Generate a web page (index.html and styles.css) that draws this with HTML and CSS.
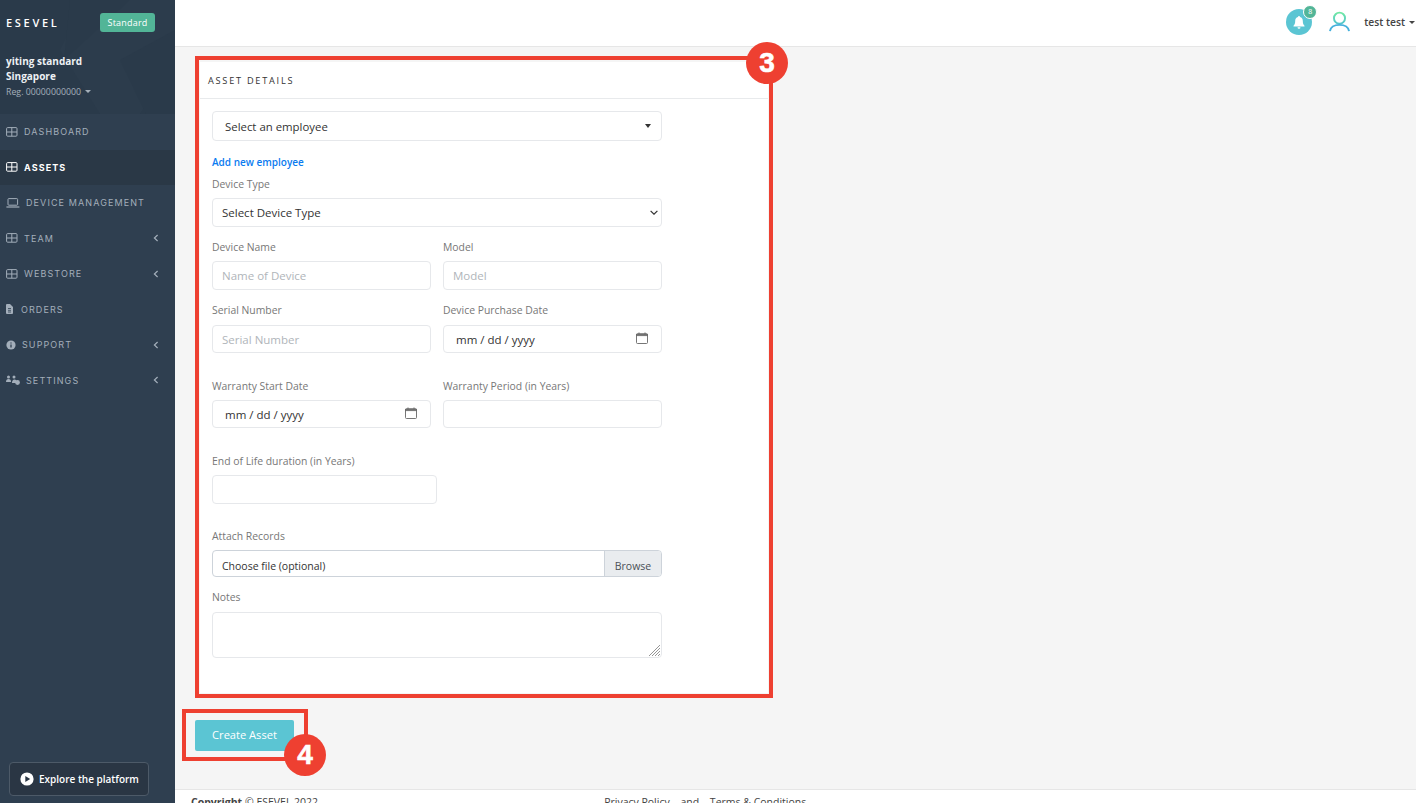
FILE: index.html
```html
<!DOCTYPE html>
<html>
<head>
  <title>Create Asset</title>
  <link rel="stylesheet" href="styles.css">
</head>
<body>
  <aside class="sidebar">
    <div class="side-top">
      <svg class="side-pattern" width="175" height="114" viewBox="0 0 175 114">
        <polygon points="60,50 85,0 175,0 175,60 140,114 100,114" fill="#2c3c4c"/>
        <polygon points="70,0 130,0 64,60" fill="#2a3a4a"/>
        <polygon points="120,60 175,30 175,114 146,114" fill="#2a3a4a"/>
      </svg>
      <div class="brand-row">
        <span class="brand">ESEVEL</span>
        <span class="plan">Standard</span>
      </div>
      <div class="company">yiting standard<br>Singapore</div>
      <div class="reg">Reg. 00000000000 <span class="reg-caret"></span></div>
    </div>
    <nav class="nav">
      <a class="nav-item">
        <svg class="nav-icon" width="12" height="10" viewBox="0 0 12 10"><rect x=".6" y=".6" width="10.4" height="8.6" rx="1" fill="none" stroke="currentColor" stroke-width="1"/><path d="M.6 5h10.4M5.8.6v8.6" stroke="currentColor" stroke-width="1"/></svg>
        <span class="nav-text">DASHBOARD</span>
      </a>
      <a class="nav-item active">
        <svg class="nav-icon" width="12" height="10" viewBox="0 0 12 10"><rect x=".6" y=".6" width="10.4" height="8.6" rx="1" fill="none" stroke="currentColor" stroke-width="1"/><path d="M.6 5h10.4M5.8.6v8.6" stroke="currentColor" stroke-width="1"/></svg>
        <span class="nav-text">ASSETS</span>
      </a>
      <a class="nav-item">
        <svg class="nav-icon wide" width="14" height="10" viewBox="0 0 14 10"><rect x="2" y=".6" width="9.6" height="6.6" rx=".8" fill="none" stroke="currentColor" stroke-width="1"/><path d="M.4 9h13" stroke="currentColor" stroke-width="1.2"/></svg>
        <span class="nav-text">DEVICE MANAGEMENT</span>
      </a>
      <a class="nav-item">
        <svg class="nav-icon" width="12" height="10" viewBox="0 0 12 10"><rect x=".6" y=".6" width="10.4" height="8.6" rx="1" fill="none" stroke="currentColor" stroke-width="1"/><path d="M.6 5h10.4M5.8.6v8.6" stroke="currentColor" stroke-width="1"/></svg>
        <span class="nav-text">TEAM</span>
        <svg class="nav-arrow" width="6" height="8" viewBox="0 0 6 8"><path d="M4.6 1 1.4 4l3.2 3" fill="none" stroke="currentColor" stroke-width="1.2"/></svg>
      </a>
      <a class="nav-item">
        <svg class="nav-icon" width="12" height="10" viewBox="0 0 12 10"><rect x=".6" y=".6" width="10.4" height="8.6" rx="1" fill="none" stroke="currentColor" stroke-width="1"/><path d="M.6 5h10.4M5.8.6v8.6" stroke="currentColor" stroke-width="1"/></svg>
        <span class="nav-text">WEBSTORE</span>
        <svg class="nav-arrow" width="6" height="8" viewBox="0 0 6 8"><path d="M4.6 1 1.4 4l3.2 3" fill="none" stroke="currentColor" stroke-width="1.2"/></svg>
      </a>
      <a class="nav-item">
        <svg class="nav-icon narrow" width="7" height="10" viewBox="0 0 7 10"><path d="M0 1q0-1 1-1h3l3 3v6q0 1-1 1H1q-1 0-1-1z" fill="currentColor"/><path d="M2 4.5h3M2 6.3h3M2 8h3" stroke="#2f3f50" stroke-width=".8"/></svg>
        <span class="nav-text">ORDERS</span>
      </a>
      <a class="nav-item">
        <svg class="nav-icon" width="10" height="10" viewBox="0 0 10 10"><circle cx="5" cy="5" r="4.6" fill="currentColor"/><path d="M5 4.4v3M5 2.4v1" stroke="#2f3f50" stroke-width="1.3"/></svg>
        <span class="nav-text">SUPPORT</span>
        <svg class="nav-arrow" width="6" height="8" viewBox="0 0 6 8"><path d="M4.6 1 1.4 4l3.2 3" fill="none" stroke="currentColor" stroke-width="1.2"/></svg>
      </a>
      <a class="nav-item">
        <svg class="nav-icon wide" width="14" height="10" viewBox="0 0 14 10"><circle cx="2.5" cy="2" r="1.5" fill="currentColor"/><circle cx="8" cy="2" r="1.5" fill="currentColor"/><path d="M0 7q0-3 2.5-3T5 6.5V7zM6 8q0-3.500 2.500-3.500T11 8z" fill="currentColor"/><circle cx="11.500" cy="7.500" r="2.400" fill="currentColor"/></svg>
        <span class="nav-text">SETTINGS</span>
        <svg class="nav-arrow" width="6" height="8" viewBox="0 0 6 8"><path d="M4.6 1 1.4 4l3.2 3" fill="none" stroke="currentColor" stroke-width="1.2"/></svg>
      </a>
    </nav>
    <a class="explore">
      <svg width="14" height="14" viewBox="0 0 14 14"><circle cx="7" cy="7" r="6.600" fill="#fff"/><path d="M5.300 3.900v6.200L10.200 7z" fill="#2a3644"/></svg>
      Explore the platform
    </a>
  </aside>

  <div class="page">
    <header class="topbar">
      <div class="bell">
        <svg width="12" height="13" viewBox="0 0 12 13"><path d="M6 0a1 1 0 0 1 1 1.100C9 1.600 9.800 3.200 9.800 5c0 2.800.8 3.800 1.700 4.700v.8H.5v-.8C1.400 8.800 2.200 7.800 2.200 5c0-1.800.8-3.400 2.800-3.900A1 1 0 0 1 6 0zM4.500 11.300h3a1.500 1.500 0 0 1-3 0z" fill="#fff"/></svg>
        <span class="bell-count">8</span>
      </div>
      <svg class="user-icon" width="21" height="21" viewBox="0 0 22 21">
        <defs><linearGradient id="userGrad" x1="0" y1="0" x2="0" y2="1"><stop offset="0" stop-color="#70e8a4"/><stop offset="1" stop-color="#52c4cc"/></linearGradient></defs>
        <circle cx="11" cy="7" r="5.800" fill="none" stroke="url(#userGrad)" stroke-width="2"/>
        <path d="M1 20.500c.8-4.500 4.800-6.500 10-6.500s9.200 2 10 6.500" fill="none" stroke="#46b0dc" stroke-width="2"/>
      </svg>
      <span class="user-name">test test</span>
      <span class="user-caret"></span>
    </header>

    <main class="content">
      <section class="card">
        <h2 class="card-title">ASSET DETAILS</h2>
        <form class="card-body">
          <div class="fake-select">
            <span>Select an employee</span>
            <span class="fake-caret"></span>
          </div>
          <a class="add-link">Add new employee</a>

          <label class="field-label">Device Type</label>
          <div class="select-wrap field">
            <select class="control select">
              <option>Select Device Type</option>
            </select>
            <svg class="select-arrow" width="8" height="5" viewBox="0 0 8 5"><path d="M.6.8 4 4.200 7.400.8" fill="none" stroke="#333" stroke-width="1.200"/></svg>
          </div>

          <div class="row field">
            <div class="col">
              <label class="field-label">Device Name</label>
              <input class="control" type="text" placeholder="Name of Device">
            </div>
            <div class="col">
              <label class="field-label">Model</label>
              <input class="control" type="text" placeholder="Model">
            </div>
          </div>

          <div class="row field-wide">
            <div class="col">
              <label class="field-label low">Serial Number</label>
              <input class="control short" type="text" placeholder="Serial Number">
            </div>
            <div class="col">
              <label class="field-label low">Device Purchase Date</label>
              <div class="date-wrap">
                <input class="control short date" type="text" value="mm / dd / yyyy">
                <svg class="cal" width="12" height="12" viewBox="0 0 12 12"><rect x=".5" y="1.800" width="11" height="9.700" rx="1" fill="none" stroke="#666" stroke-width=".9"/><path d="M.5 2.200h11v1.400H.5zM3 .4v2M9 .4v2" fill="#666" stroke="#666" stroke-width=".8"/></svg>
              </div>
            </div>
          </div>

          <div class="row field-wide">
            <div class="col">
              <label class="field-label">Warranty Start Date</label>
              <div class="date-wrap">
                <input class="control short date" type="text" value="mm / dd / yyyy">
                <svg class="cal" width="12" height="12" viewBox="0 0 12 12"><rect x=".5" y="1.800" width="11" height="9.700" rx="1" fill="none" stroke="#666" stroke-width=".9"/><path d="M.5 2.200h11v1.400H.5zM3 .4v2M9 .4v2" fill="#666" stroke="#666" stroke-width=".8"/></svg>
              </div>
            </div>
            <div class="col">
              <label class="field-label">Warranty Period (in Years)</label>
              <input class="control short" type="text">
            </div>
          </div>

          <div class="field-life">
            <label class="field-label">End of Life duration (in Years)</label>
            <input class="control life" type="text">
          </div>

          <label class="field-label">Attach Records</label>
          <div class="file field">
            <span class="file-text">Choose file (optional)</span>
            <span class="file-btn">Browse</span>
          </div>

          <label class="field-label low">Notes</label>
          <div class="notes-wrap">
            <textarea class="control notes"></textarea>
            <svg class="notes-grip" width="13" height="13" viewBox="0 0 13 13"><path d="M1 12 12 1M4 12l8-8M7 12l5-5M10 12l2-2" stroke="#8a8a8a" stroke-width=".9"/></svg>
          </div>
        </form>
      </section>
      <button class="create-btn" type="button">Create Asset</button>
    </main>

    <footer class="footer">
      <span class="copyright"><b>Copyright</b> © ESEVEL 2022</span>
      <span class="footer-links">Privacy Policy <span class="footer-gap">and</span> Terms &amp; Conditions</span>
    </footer>
  </div>

  <!-- annotations over the screenshot -->
  <div class="mark mark-card"></div>
  <div class="mark mark-btn"></div>
  <div class="step step-3">3</div>
  <div class="step step-4">4</div>
</body>
</html>
```
FILE: styles.css
```css
* {
  box-sizing: border-box;
}

html, body {
  height: 100%;
}

body {
  margin: 0;
  display: flex;
  height: 803px;
  overflow: hidden;
  position: relative;
  background-color: #f5f5f5;
  font-family: "Open Sans", "Liberation Sans", sans-serif;
  font-size: 11px;
  color: #333;
}

/* sidebar */
.sidebar {
  width: 175px;
  flex: none;
  display: flex;
  flex-direction: column;
  background-color: #2f3f50;
  color: #fff;
}

.side-top {
  height: 114px;
  position: relative;
  background-color: #2a3a4a;
  padding: 13px 20px 0 6px;
}

.side-pattern {
  position: absolute;
  left: 0;
  top: 0;
}

.brand-row,
.company,
.reg {
  position: relative;
}

.brand-row {
  display: flex;
  justify-content: space-between;
  align-items: center;
  height: 19px;
}

.brand {
  font-size: 11px;
  font-weight: 600;
  letter-spacing: 2.700px;
}

.plan {
  width: 55px;
  height: 19px;
  line-height: 19px;
  text-align: center;
  font-size: 9px;
  letter-spacing: .2px;
  background-color: #52b597;
  border-radius: 3px;
}

.company {
  margin-top: 22px;
  font-size: 10px;
  font-weight: 700;
  line-height: 15px;
  color: #eef1f4;
}

.reg {
  margin-top: 1px;
  font-size: 8.800px;
  line-height: 15px;
  color: #a4afba;
}

.reg-caret {
  display: inline-block;
  margin-left: 2px;
  vertical-align: 2px;
  border-left: 3px solid transparent;
  border-right: 3px solid transparent;
  border-top: 3px solid #a4afba;
}

.nav {
  display: flex;
  flex-direction: column;
}

.nav-item {
  height: 35.500px;
  display: flex;
  align-items: center;
  padding: 0 16px 0 6px;
  color: #a3aeba;
  font-family: "Inter", "Liberation Sans", sans-serif;
  font-size: 9px;
  letter-spacing: 1.100px;
}

.nav-item.active {
  background-color: #2a3846;
  color: #fff;
  font-weight: 700;
}

.nav-icon {
  flex: none;
  margin-right: 6px;
}

.nav-icon.narrow {
  margin-right: 8px;
}

.nav-arrow {
  margin-left: auto;
  flex: none;
}

.explore {
  margin: auto 0 7px 9px;
  width: 140px;
  height: 34px;
  display: flex;
  align-items: center;
  gap: 5px;
  padding-left: 10px;
  background-color: #2a3644;
  border: 1px solid #4d5a68;
  border-radius: 4px;
  font-size: 10px;
  font-weight: 600;
}

/* main column */
.page {
  flex: 1;
  min-width: 0;
  display: flex;
  flex-direction: column;
}

.topbar {
  height: 47px;
  flex: none;
  display: flex;
  align-items: center;
  padding: 0 1px 5px 0;
  justify-content: flex-end;
  background-color: #fff;
  border-bottom: 1px solid #e6e6e6;
}

.bell {
  width: 26px;
  height: 26px;
  margin-top: 3px;
  border-radius: 50%;
  background-color: #5bc5d3;
  display: flex;
  align-items: center;
  justify-content: center;
  position: relative;
}

.bell-count {
  position: absolute;
  right: -5px;
  top: -4px;
  width: 14px;
  height: 14px;
  line-height: 12px;
  text-align: center;
  font-size: 7px;
  color: #fff;
  background-color: #52b597;
  border: 1px solid #fff;
  border-radius: 50%;
}

.user-icon {
  margin-left: 17px;
  margin-top: 2px;
}

.user-name {
  margin-left: 14px;
  font-size: 10.300px;
  font-weight: 600;
  color: #444;
  margin-top: 3px;
}

.user-caret {
  margin-left: 4px;
  margin-top: 3px;
  border-left: 3px solid transparent;
  border-right: 3px solid transparent;
  border-top: 3px solid #444;
}

.content {
  flex: 1;
  min-height: 0;
  padding: 15px 0 0 25px;
}

.card {
  width: 568px;
  height: 631px;
  background-color: #fff;
}

.card-title {
  margin: 0;
  height: 37px;
  padding: 12px 0 0 8px;
  font-size: 9.200px;
  font-weight: 400;
  line-height: 14px;
  letter-spacing: 1.750px;
  color: #333;
  border-bottom: 1px solid #e8eaec;
}

.card-body {
  width: 474px;
  padding: 12px 0 0 12px;
}

.fake-select {
  width: 450px;
  height: 30px;
  display: flex;
  align-items: center;
  justify-content: space-between;
  padding: 0 10px 0 12px;
  font-size: 11.400px;
  color: #333;
  border: 1px solid #e6e8eb;
  border-radius: 4px;
}

.fake-caret {
  border-left: 3px solid transparent;
  border-right: 3px solid transparent;
  border-top: 4px solid #333;
}

.add-link {
  display: block;
  margin: 13px 0 6px;
  height: 16px;
  line-height: 16px;
  font-size: 10px;
  font-weight: 600;
  color: #0a7bf0;
}

.field-label {
  display: block;
  height: 16px;
  line-height: 16px;
  margin-bottom: 6px;
  font-size: 10.400px;
  color: #777;
}

.field-label.low {
  margin-bottom: 7px;
}

.control {
  display: block;
  width: 100%;
  height: 29px;
  padding: 0 9px;
  font-family: inherit;
  font-size: 11.500px;
  color: #333;
  background-color: #fff;
  border: 1px solid #e6e8eb;
  border-radius: 4px;
  outline: none;
}

.control.short {
  height: 28px;
}

.control::placeholder {
  color: #b0b5ba;
}

.field {
  margin-bottom: 12px;
}

.field-wide {
  margin-bottom: 25px;
}

.field-life {
  margin-bottom: 24px;
}

.row {
  display: flex;
  gap: 12px;
  width: 450px;
}

.col {
  flex: 1;
  min-width: 0;
}

.select-wrap {
  position: relative;
  width: 450px;
}

.select {
  appearance: none;
}

.select-arrow {
  position: absolute;
  right: 4px;
  top: 12px;
}

.date-wrap {
  position: relative;
}

.date {
  padding-left: 12px;
}

.cal {
  position: absolute;
  right: 14px;
  top: 7px;
}

.life {
  width: 225px;
}

.file {
  width: 450px;
  height: 27px;
  display: flex;
  border: 1px solid #cdd3da;
  border-radius: 4px;
  overflow: hidden;
}

.file-text {
  flex: 1;
  padding: 6px 0 0 9px;
  font-size: 10.500px;
  line-height: 18px;
}

.file-btn {
  width: 57px;
  padding-top: 6px;
  text-align: center;
  font-size: 10.500px;
  line-height: 18px;
  color: #495057;
  background-color: #e9ecef;
  border-left: 1px solid #cdd3da;
}

.notes-wrap {
  position: relative;
  width: 450px;
}

.notes {
  height: 46px;
  padding: 6px 9px;
  resize: none;
}

.notes-grip {
  position: absolute;
  right: 1px;
  bottom: 1px;
}

.create-btn {
  display: block;
  margin: 27px 0 0 -5px;
  width: 99px;
  height: 31px;
  padding: 0 0 2px;
  font-family: inherit;
  font-size: 11.100px;
  color: #fff;
  background-color: #5bc5d3;
  border: none;
  border-radius: 2px;
}

/* the page is cut by the window here, as in the capture */
.footer {
  height: 14px;
  flex: none;
  display: flex;
  padding: 5px 0 0 16px;
  overflow: hidden;
  background-color: #fff;
  border-top: 1px solid #e6e6e6;
  font-size: 10.500px;
  line-height: 14px;
  color: #444;
}

.footer-links {
  margin-left: 286px;
  white-space: nowrap;
}

.footer-gap {
  margin: 0 8px;
}

/* annotations */
.mark {
  position: absolute;
  border: 4px solid #ee4031;
}

.mark-card {
  left: 195px;
  top: 56px;
  width: 578px;
  height: 642px;
}

.mark-btn {
  left: 182px;
  top: 709px;
  width: 126px;
  height: 52px;
}

.step {
  position: absolute;
  width: 42px;
  height: 42px;
  line-height: 41px;
  text-align: center;
  font-family: "Liberation Sans", sans-serif;
  font-size: 28px;
  font-weight: 700;
  -webkit-text-stroke: .6px #fff;
  color: #fff;
  background-color: #ee4031;
  border-radius: 50%;
}

.step-3 {
  left: 746px;
  top: 42px;
}

.step-4 {
  left: 284px;
  top: 734px;
}
```
